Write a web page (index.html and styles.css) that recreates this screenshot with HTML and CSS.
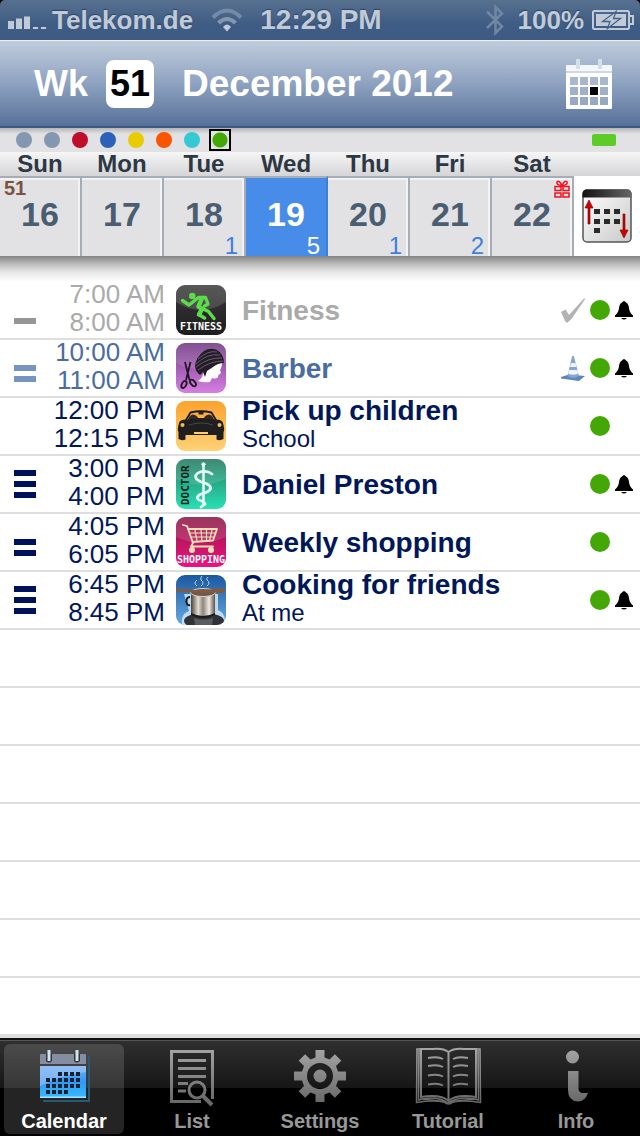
FILE: index.html
```
<!DOCTYPE html>
<html lang="en">
<head>
    <meta charset="UTF-8">
    <meta name="viewport" content="width=device-width, initial-scale=1.0">
    <title>Calendar - December 2012</title>
    <link rel="stylesheet" href="styles.css">
</head>
<body>
    <!-- shared shapes and gradients -->
    <svg class="defs" width="0" height="0" aria-hidden="true">
        <defs>
            <linearGradient id="tabGray" gradientUnits="userSpaceOnUse" x1="0" y1="0" x2="0" y2="60">
                <stop offset="0" stop-color="#a8a8a8"/>
                <stop offset="1" stop-color="#646464"/>
            </linearGradient>
            <symbol id="bell" viewBox="0 0 18 20">
                <path d="M7 2.500Q9-.5 11 2.500Q13.500 3.500 14 8Q14.500 13 18 15.500V17H0V15.500Q3.500 13 4 8Q4.500 3.500 7 2.500ZM6 18H12Q9 21 6 18Z"/>
            </symbol>
        </defs>
    </svg>

    <div class="status-bar">
        <div class="status-left">
            <svg width="38" height="20" viewBox="0 0 38 20" fill="#c1cbd8">
                <path d="M0 11h6v8H0zM8 8.500h6V19H8zM16 6.500h6V19h-6zM25 17h5v2h-5zM33 17h5v2h-5z"/>
            </svg>
            <span class="carrier">Telekom.de</span>
            <svg width="32" height="24" viewBox="0 0 32 24" fill="none" stroke-width="4">
                <path d="M2 9.500Q16-4.500 30 9.500" stroke="#748aa8"/>
                <path d="M7.500 15Q16 7 24.500 15" stroke="#8496b0"/>
                <path d="M12 19Q16 14 20 19L16 23.500Z" fill="#c1cbd8"/>
            </svg>
        </div>
        <span class="clock">12:29 PM</span>
        <div class="status-right">
            <svg class="bluetooth" width="18" height="32" viewBox="0 0 18 32" fill="none" stroke="#7187a4" stroke-width="2.500">
                <path d="M1 7.500L16 22.500L9.500 29V3L16 9.500L1 24"/>
            </svg>
            <span>100%</span>
            <svg width="42" height="20" viewBox="0 0 42 20">
                <rect x="1" y="1" width="36" height="18" rx="1.500" fill="none" stroke="#c1cbd8" stroke-width="2"/>
                <path d="M38 6h3v8h-3" fill="none" stroke="#c1cbd8" stroke-width="2"/>
                <rect x="4" y="4" width="30" height="12" fill="#c1cbd8"/>
                <path d="M24 1.500L10.500 11.500H18L15.500 18.500L28.500 8.500H21.500Z" fill="#c1cbd8" stroke="#45618a" stroke-width="1.300"/>
            </svg>
        </div>
    </div>

    <header class="title-bar">
        <span>Wk</span>
        <span class="week-badge">51</span>
        <h1>December 2012</h1>
        <button class="today-btn" aria-label="Go to date">
            <svg width="46" height="50" viewBox="0 0 46 50">
                <path d="M0 7Q0 6 1 6H45Q46 6 46 7V14H0Z" fill="#f3f6fa"/>
                <path d="M0 12h46v2H0z" fill="#cfd8e4"/>
                <path d="M10 0h4v10h-4zM32 0h4v10h-4z" fill="#d5dfea"/>
                <path d="M0 14H46V49Q46 50 45 50H1Q0 50 0 49Z" fill="#fff"/>
                <path d="M4 18h8v8H4zM14 18h8v8h-8zM24 18h8v8h-8zM34 18h8v8h-8z" fill="#a9b7cf"/>
                <path d="M4 28h8v8H4zM14 28h8v8h-8zM34 28h8v8h-8z" fill="#a0b0c9"/>
                <path d="M4 38h8v8H4zM14 38h8v8h-8zM24 38h8v8h-8zM34 38h8v8h-8z" fill="#98a8c3"/>
                <path d="M24 28h8v8h-8z" fill="#000"/>
            </svg>
        </button>
    </header>

    <div class="filters">
        <button class="dot slate" aria-label="Calendar 1"></button>
        <button class="dot slate" aria-label="Calendar 2"></button>
        <button class="dot red" aria-label="Calendar 3"></button>
        <button class="dot blue" aria-label="Calendar 4"></button>
        <button class="dot yellow" aria-label="Calendar 5"></button>
        <button class="dot orange" aria-label="Calendar 6"></button>
        <button class="dot cyan" aria-label="Calendar 7"></button>
        <button class="dot green selected" aria-label="Calendar 8"></button>
        <span class="sync"></span>
    </div>

    <div class="weekdays">
        <span>Sun</span>
        <span>Mon</span>
        <span>Tue</span>
        <span>Wed</span>
        <span>Thu</span>
        <span>Fri</span>
        <span>Sat</span>
    </div>

    <div class="week">
        <button class="day"><span class="week-no">51</span>16</button>
        <button class="day">17</button>
        <button class="day">18<span class="count">1</span></button>
        <button class="day active">19<span class="count">5</span></button>
        <button class="day">20<span class="count">1</span></button>
        <button class="day">21<span class="count">2</span></button>
        <button class="day">22
            <svg class="gift" width="16" height="18" viewBox="0 0 16 18" fill="none" stroke="#f01420" stroke-width="1.500">
                <path d="M1 6.500h6v4H1zM9 6.500h6v4H9zM1 13h6v4H1zM9 13h6v4H9z"/>
                <path d="M8 5.500Q2 5 3 2Q5-.5 8 5.500Q11-.5 13 2Q14 5 8 5.500ZM8 5v2"/>
            </svg>
        </button>
        <button class="week-switch" aria-label="Change view">
            <svg width="50" height="54" viewBox="0 0 50 54">
                <defs>
                    <linearGradient id="sheet" x1="0" y1="0" x2="1" y2="1">
                        <stop offset="0" stop-color="#fff"/>
                        <stop offset="1" stop-color="#c9c9c9"/>
                    </linearGradient>
                    <linearGradient id="sheetTop" x1="0" y1="0" x2="1" y2="0">
                        <stop offset="0" stop-color="#111"/>
                        <stop offset="1" stop-color="#666"/>
                    </linearGradient>
                </defs>
                <rect x="1" y="1" width="48" height="52" rx="4" fill="url(#sheet)" stroke="#555" stroke-width="1.500"/>
                <path d="M.5 8.500V5Q.5.500 5 .5H45Q49.500.500 49.500 5V8.500Z" fill="url(#sheetTop)"/>
                <path d="M12 20h6v5h-6zM22 20h6v5h-6zM32 20h6v5h-6zM12 30h6v5h-6zM22 30h6v5h-6zM32 30h6v5h-6zM12 39h6v5h-6z" fill="#2a2a2a"/>
                <path d="M7 11L11 19H8V35H6V19H3ZM42 49L38 41H41V25H43V41H46Z" fill="#d40000" stroke="#600" stroke-width=".6"/>
            </svg>
        </button>
    </div>
    <div class="week-shadow"></div>

    <ul class="events">
        <li class="event past">
            <span class="bars"><i></i></span>
            <span class="times">7:00 AM<br>8:00 AM</span>
            <svg class="event-icon" viewBox="0 0 50 50">
                <defs>
                    <linearGradient id="gFit" x1="0" y1="0" x2="0" y2="1">
                        <stop offset="0" stop-color="#3a3a3a"/>
                        <stop offset="1" stop-color="#1d1d1d"/>
                    </linearGradient>
                </defs>
                <rect width="50" height="50" fill="url(#gFit)"/>
                <path d="M0 0H50V17Q25 33 0 17Z" fill="#fff" opacity=".15"/>
                <circle cx="16.300" cy="11" r="3.300" fill="#5ddc4b"/>
                <g fill="none" stroke="#5ddc4b" stroke-width="3.400" stroke-linecap="round" stroke-linejoin="round">
                    <path d="M6.500 15.500L13 20L22.500 12.500H29.500L32 19L28.500 21"/>
                    <path d="M26 13L22.500 21.500L26 24L23 29.500" stroke-width="4.500"/>
                    <path d="M22.500 21.500L32.500 26.500L38 33.500M23.500 30L28.500 33" stroke-width="3.500"/>
                </g>
                <text class="icon-label" x="25" y="45" text-anchor="middle" font-size="10" fill="#fff">FITNESS</text>
            </svg>
            <div class="info"><span class="event-title">Fitness</span></div>
            <svg class="mark" viewBox="0 0 26 26">
                <path d="M1 15L5.500 12.500L9 18L24 1.500L25.500 1.500L11.500 22L7 26L5 24Z" fill="#b3b3b3"/>
            </svg>
            <span class="circle"></span>
            <svg class="bell"><use href="#bell"/></svg>
        </li>
        <li class="event current">
            <span class="bars"><i></i><i></i></span>
            <span class="times">10:00 AM<br>11:00 AM</span>
            <svg class="event-icon" viewBox="0 0 50 50">
                <defs>
                    <linearGradient id="gHair" x1="0" y1="0" x2="0" y2="1">
                        <stop offset="0" stop-color="#703a83"/>
                        <stop offset="1" stop-color="#d77fe2"/>
                    </linearGradient>
                </defs>
                <rect width="50" height="50" fill="url(#gHair)"/>
                <path d="M0 0H50V19Q25 33 0 20Z" fill="#fff" opacity=".12"/>
                <path d="M30 24Q40 19 46 19Q46 25 44 27L45 30L42.500 32Q42 37 36 35L34 39Q27 40 22 38Q28 34 27 28Z" fill="#fff"/>
                <path d="M48 20Q42 20 37 24L31 28L29 34L27 29L24 32Q19 28 19 23Q20 14 28 8Q34 4 41 7Q48 11 48 20Z" fill="#241d28"/>
                <path d="M20 21Q31 10 44 12M20 24Q33 14 46 15M22 27Q34 18 47 18M22 16Q32 7 41 9" fill="none" stroke="#7d6b85" stroke-width=".8"/>
                <g fill="none" stroke="#211527" stroke-width="1.800">
                    <path d="M9 19L13.500 37M14.500 19L10 37"/>
                    <ellipse cx="8" cy="41.500" rx="2.200" ry="3.800" transform="rotate(28 8 41.500)"/>
                    <ellipse cx="17" cy="40" rx="2.200" ry="3.800" transform="rotate(-40 17 40)"/>
                </g>
            </svg>
            <div class="info"><span class="event-title">Barber</span></div>
            <svg class="mark" viewBox="0 0 26 26">
                <path d="M1 22L9 19.500L25 21L19 26L1 23.500Z" fill="#5c86bd"/>
                <path d="M12 1.500Q13 0 14 1.500L19 21Q13 25 7.500 21Z" fill="#86a6cf"/>
                <path d="M11 8H15.500L16.500 12H10ZM9 15H17.500L18.300 18.500Q13 21 8 18.500Z" fill="#eff4fa"/>
            </svg>
            <span class="circle"></span>
            <svg class="bell"><use href="#bell"/></svg>
        </li>
        <li class="event">
            <span class="bars"></span>
            <span class="times">12:00 PM<br>12:15 PM</span>
            <svg class="event-icon" viewBox="0 0 50 50">
                <defs>
                    <linearGradient id="gCar" x1="0" y1="0" x2="0" y2="1">
                        <stop offset="0" stop-color="#fba22d"/>
                        <stop offset="1" stop-color="#ffd276"/>
                    </linearGradient>
                </defs>
                <rect width="50" height="50" fill="url(#gCar)"/>
                <path d="M10 19L14.500 11.500Q25 9 35.500 11.500L40 19" fill="none" stroke="#191919" stroke-width="1.800"/>
                <path d="M12 19Q13 14 17 13.500Q21 14 22 17H28Q29 14 33 13.500Q37 14 38 19Z" fill="#33291c"/>
                <path d="M22.500 11h5v2.500h-5z" fill="#222"/>
                <path d="M3 22Q4 18 11 18.500Q25 16.500 39 18.500Q46 18 47 22Q49 29 47.500 31V38Q44 40 40.500 38.500V34H9.500V38.500Q6 40 2.500 38V31Q1 29 3 22Z" fill="#1f1f1f"/>
                <path d="M13 24Q25 20 37 24" fill="none" stroke="#454545"/>
                <circle cx="6.500" cy="24" r="2" fill="#f3bd5a"/>
                <circle cx="43.500" cy="24" r="2" fill="#f3bd5a"/>
                <path d="M18 31h14v2H18z" fill="#ffcc6c"/>
            </svg>
            <div class="info">
                <span class="event-title">Pick up children</span>
                <span class="event-place">School</span>
            </div>
            <span class="circle"></span>
            <span class="bell"></span>
        </li>
        <li class="event">
            <span class="bars"><i></i><i></i><i></i></span>
            <span class="times">3:00 PM<br>4:00 PM</span>
            <svg class="event-icon" viewBox="0 0 50 50">
                <defs>
                    <linearGradient id="gDoc" x1="0" y1="0" x2="0" y2="1">
                        <stop offset="0" stop-color="#237a5f"/>
                        <stop offset="1" stop-color="#2ae0b4"/>
                    </linearGradient>
                </defs>
                <rect width="50" height="50" fill="url(#gDoc)"/>
                <path d="M0 0H50V20Q25 31 0 20Z" fill="#fff" opacity=".12"/>
                <text class="icon-label" transform="translate(12.500 46) rotate(-90)" font-size="11" fill="#10281f">DOCTOR</text>
                <path d="M27.500 5V46" stroke="#e5fff7" stroke-width="2.500"/>
                <path d="M25 5L27.500 3L30 5L27.500 9Z" fill="#e5fff7"/>
                <path d="M36 15Q31 11 24 13Q17 16 21 20.500Q24 23 30 24.500Q38 28 32 32.500Q29 34 25 35Q19 38 23 41Q29 43 29 45L25 48" fill="none" stroke="#e5fff7" stroke-width="2.800" stroke-linecap="round"/>
            </svg>
            <div class="info"><span class="event-title">Daniel Preston</span></div>
            <span class="circle"></span>
            <svg class="bell"><use href="#bell"/></svg>
        </li>
        <li class="event">
            <span class="bars"><i></i><i></i></span>
            <span class="times">4:05 PM<br>6:05 PM</span>
            <svg class="event-icon" viewBox="0 0 50 50">
                <defs>
                    <linearGradient id="gShop" x1="0" y1="0" x2="0" y2="1">
                        <stop offset="0" stop-color="#8a1c47"/>
                        <stop offset="1" stop-color="#f0117e"/>
                    </linearGradient>
                </defs>
                <rect width="50" height="50" fill="url(#gShop)"/>
                <path d="M0 0H50V20Q25 31 0 20Z" fill="#fff" opacity=".12"/>
                <g fill="none" stroke="#f5e2b4" stroke-width="1.800" stroke-linejoin="round" stroke-linecap="round">
                    <path d="M7 8L11 9L17 26L15 29.500H37"/>
                    <path d="M12.500 12H41L37 23.500L16.500 25"/>
                    <path d="M14 16H39.500M15.500 20H38.500M19 13L21 24M25 13L26 24M30.500 13V24M36 13L33.500 24" stroke-width="1.200"/>
                </g>
                <circle cx="16" cy="33" r="3" fill="#f5e2b4"/>
                <circle cx="35" cy="33" r="3" fill="#f5e2b4"/>
                <text class="icon-label" x="25" y="46" text-anchor="middle" font-size="10" fill="#fff">SHOPPING</text>
            </svg>
            <div class="info"><span class="event-title">Weekly shopping</span></div>
            <span class="circle"></span>
            <span class="bell"></span>
        </li>
        <li class="event">
            <span class="bars"><i></i><i></i><i></i></span>
            <span class="times">6:45 PM<br>8:45 PM</span>
            <svg class="event-icon" viewBox="0 0 50 50">
                <defs>
                    <linearGradient id="gCook" x1="0" y1="0" x2="0" y2="1">
                        <stop offset="0" stop-color="#1b57a0"/>
                        <stop offset="1" stop-color="#66abe0"/>
                    </linearGradient>
                    <linearGradient id="gPot" x1="0" y1="0" x2="1" y2="0">
                        <stop offset="0" stop-color="#4b423a"/>
                        <stop offset=".3" stop-color="#e6dfd6"/>
                        <stop offset=".5" stop-color="#8e857b"/>
                        <stop offset=".75" stop-color="#f0ebe4"/>
                        <stop offset="1" stop-color="#5a5148"/>
                    </linearGradient>
                </defs>
                <rect width="50" height="50" fill="url(#gCook)"/>
                <path d="M8 19H42V35Q49 38 49 46V50H6V44Q7 38 13 36Z" fill="#dcedfa" opacity=".8"/>
                <ellipse cx="28" cy="46" rx="20" ry="8" fill="#303238"/>
                <path d="M15 18H39V39Q27 45 15 39Z" fill="url(#gPot)"/>
                <path d="M18 43Q28 46 37 43L36 50H19Z" fill="#77777a" opacity=".6"/>
                <path d="M15 38Q27 44 39 38V40Q27 46 15 40Z" fill="#1b1b1d"/>
                <ellipse cx="27" cy="17.500" rx="12.500" ry="4" fill="#6c5a4b" stroke="#d9d0c7"/>
                <path d="M0 13.500L26 15.500L44 13Q50 13.500 49 16.500Q46 19.500 41 17.500L24 17.500L0 16.500Z" fill="#88583a"/>
                <path d="M14 22Q10 22 10.500 27Q11 31 14 30" fill="none" stroke="#15171c" stroke-width="2"/>
                <path d="M21 11Q17 8 21 5M25 11Q29 8 25 5Q24 3 26 1M31 11Q35 8 31 5Q30 4 32 2" fill="none" stroke="#b7d4ee"/>
            </svg>
            <div class="info">
                <span class="event-title">Cooking for friends</span>
                <span class="event-place">At me</span>
            </div>
            <span class="circle"></span>
            <svg class="bell"><use href="#bell"/></svg>
        </li>
    </ul>

    <nav class="tab-bar">
        <a href="#calendar" class="tab selected">
            <svg width="80" height="62" viewBox="0 0 80 62">
                <defs>
                    <linearGradient id="gCal" x1="0" y1="0" x2="0" y2="1">
                        <stop offset="0" stop-color="#6fb0f5"/>
                        <stop offset=".5" stop-color="#2f98fb"/>
                        <stop offset="1" stop-color="#35bdfb"/>
                    </linearGradient>
                </defs>
                <path d="M64 10h2v46H19v-2h45z" fill="#2a5a73"/>
                <path d="M16 9Q16 8 17 8H61Q62 8 62 9V18H16Z" fill="#858da0"/>
                <path d="M22 8h6v7q-3 3-6 0zM50 8h6v7q-3 3-6 0z" fill="#333"/>
                <path d="M23.500 4h3v11h-3zM51.500 4h3v11h-3z" fill="#cfe4f4"/>
                <rect x="16" y="20" width="46" height="32" fill="url(#gCal)"/>
                <path d="M16 20H62V26Q42 28 16 40Z" fill="#a9c8f3" opacity=".6"/>
                <path d="M16 50.500h46V52H16z" fill="#a5e4ff"/>
                <path d="M34 26h4v4h-4zM40 26h4v4h-4zM46 26h4v4h-4zM52 26h4v4h-4zM22 32h4v4h-4zM28 32h4v4h-4zM34 32h4v4h-4zM40 32h4v4h-4zM46 32h4v4h-4zM52 32h4v4h-4zM22 38h4v4h-4zM28 38h4v4h-4zM34 38h4v4h-4zM40 38h4v4h-4zM46 38h4v4h-4zM52 38h4v4h-4zM22 44h4v4h-4zM28 44h4v4h-4zM34 44h4v4h-4zM40 44h4v4h-4z" fill="#17212c"/>
            </svg>
            <span>Calendar</span>
        </a>
        <a href="#list" class="tab">
            <svg width="80" height="62" viewBox="0 0 80 62" fill="none" stroke="url(#tabGray)" stroke-width="3">
                <path d="M49 55.500H19.500V5.500H60.500V53"/>
                <path d="M26 14.500L54 14.501M26 22.500L54 22.501M26 30.500L54 30.501M26 37.500L36 37.501M26 45L34 45.001"/>
                <circle cx="45" cy="44" r="8"/>
                <path d="M51 50L60 59" stroke-width="4"/>
            </svg>
            <span>List</span>
        </a>
        <a href="#settings" class="tab">
            <svg width="80" height="62" viewBox="0 0 80 62">
                <path d="M35.500 4H44.500V11.500L49.500 13.600L54.900 8.300L61.300 14.700L56 20.100L58 25.500H66V34.500H58L56 39.900L61.300 45.300L54.900 51.700L49.500 46.400L44.500 48.500V56H35.500V48.500L30.500 46.400L25.100 51.700L18.700 45.300L24 39.900L22 34.500H14V25.500H22L24 20.100L18.700 14.700L25.100 8.300L30.500 13.600L35.500 11.500ZM40 17A13 13 0 1 0 40 43A13 13 0 1 0 40 17Z" fill="url(#tabGray)" fill-rule="evenodd"/>
                <circle cx="40" cy="30" r="6.500" fill="url(#tabGray)"/>
            </svg>
            <span>Settings</span>
        </a>
        <a href="#tutorial" class="tab">
            <svg width="80" height="62" viewBox="0 0 80 62" fill="none" stroke="url(#tabGray)" stroke-width="1.500">
                <path d="M40.500 6Q35 2 25 3L13 3V51Q33 48 40.500 55Q48 48 68 51V3L56 3Q46 2 40.500 6V55" stroke-width="2"/>
                <path d="M13 3H9L8.500 56.500Q25 54 36 56Q40.500 60 45 56Q56 54 72.500 56.500L72 3H68"/>
                <path d="M11 4L10.500 54Q28 49 40 57Q53 49 70.500 54L70 4M12 53Q30 54 40 57Q50 54 69 53"/>
                <path d="M20 12Q30 10 35 13M20 20Q30 18 35 21M20 29.500Q30 27.500 35 30.500M20 38.500Q30 36.500 35 39.500M45 13Q50 10 60 12M45 21Q50 18 60 20M45 30.500Q50 27.500 60 29.500M45 39.500Q50 36.500 60 38.500" stroke-width="2"/>
            </svg>
            <span>Tutorial</span>
        </a>
        <a href="#info" class="tab">
            <svg width="80" height="62" viewBox="0 0 80 62" fill="url(#tabGray)">
                <circle cx="36.500" cy="11" r="6.500"/>
                <path d="M32 25H42.500V43Q43 47 47 47H52Q49 55.500 42 55.500Q32 55 32 44Z"/>
            </svg>
            <span>Info</span>
        </a>
    </nav>
</body>
</html>
```
FILE: styles.css
```
* {
    box-sizing: border-box;
}

html {
    background: #000;
}

body {
    display: flex;
    flex-direction: column;
    min-height: 100vh;
    margin: 0;
    font-family: "Liberation Sans", Arial, sans-serif;
    color: #00175a;
}

button {
    padding: 0;
    border: none;
    background: none;
    font-family: inherit;
    cursor: pointer;
}

svg {
    display: block;
    flex: none;
}

.defs {
    position: absolute;
}

/* status bar */
.status-bar {
    display: grid;
    grid-template-columns: 1fr auto 1fr;
    align-items: center;
    height: 40px;
    padding: 0 6px 0 8px;
    border-radius: 5px 5px 0 0;
    background: linear-gradient(#57718f, #3f5c84 60%, #3d5a82);
    color: #c1cbd8;
    font-size: 26px;
    font-weight: bold;
    text-shadow: 0 -1px 1px #2c4466;
}

.status-left,
.status-right {
    display: flex;
    align-items: center;
}

.status-right {
    justify-content: flex-end;
}

.carrier {
    margin: 0 18px 0 6px;
}

.clock {
    font-size: 28px;
}

.bluetooth {
    margin-right: 14px;
}

.status-right span {
    margin-right: 8px;
}

/* title bar */
.title-bar {
    display: flex;
    align-items: center;
    height: 88px;
    padding: 0 28px 0 34px;
    border-top: 1px solid #eef2f7;
    border-bottom: 2px solid #3d5a84;
    background: linear-gradient(#c0ccdc, #8ea2c0 50%, #577199);
    color: #fff;
    font-size: 36px;
    font-weight: bold;
}

.week-badge {
    width: 48px;
    margin: 0 28px 0 18px;
    border-radius: 8px;
    background: #fff;
    color: #000;
    line-height: 48px;
    text-align: center;
}

.title-bar h1 {
    flex: 1;
    margin: 0;
    font-size: 37px;
}

/* calendar filter dots */
.filters {
    display: flex;
    align-items: center;
    gap: 6px;
    height: 24px;
    padding: 0 24px 0 13px;
    background: linear-gradient(#b5b5b8, #e2e2e4 6px);
}

.dot {
    width: 22px;
    height: 22px;
    border: 3px solid transparent;
    border-radius: 50%;
    background-clip: padding-box;
}

.dot.selected {
    border: 2px solid #000;
    border-radius: 0;
    background: radial-gradient(circle, #43a806 7px, #e2e2e4 8px);
}

.slate { background-color: #8497b1; }
.red { background-color: #bf0d2b; }
.blue { background-color: #2b62b8; }
.yellow { background-color: #e8cb00; }
.orange { background-color: #fb5500; }
.cyan { background-color: #34c9d3; }

.sync {
    width: 24px;
    height: 12px;
    margin-left: auto;
    border-radius: 2px;
    background: #5fcb28;
}

/* week strip */
.weekdays,
.week {
    display: grid;
    grid-template-columns: repeat(7, 1fr) 66px;
}

.weekdays {
    height: 24px;
    background: linear-gradient(#f6f6f7, #d5d5d7);
    color: #2c3844;
    font-size: 24px;
    font-weight: bold;
    line-height: 24px;
    text-align: center;
}

.weekdays span {
    padding-right: 2px;
}

.week {
    height: 80px;
    background: #fff;
}

.day {
    position: relative;
    padding-bottom: 6px;
    border-top: 2px solid #a5adb7;
    border-right: 2px solid #a5adb7;
    background: #e2e2e4;
    box-shadow: inset -2px 2px #f3f3f5;
    color: #4b5d70;
    font-size: 34px;
    font-weight: bold;
}

.day.active {
    border-right-color: #3f7fd2;
    background: #468ce8;
    box-shadow: none;
    color: #fff;
}

.week-no {
    position: absolute;
    top: 0;
    left: 4px;
    color: #7a5343;
    font-size: 20px;
    line-height: 20px;
}

.count {
    position: absolute;
    right: 6px;
    bottom: 0;
    color: #3f7fda;
    font-size: 24px;
    font-weight: normal;
    line-height: 20px;
}

.active .count {
    color: #fff;
}

.gift {
    position: absolute;
    top: 2px;
    right: 2px;
}

.week-switch {
    display: flex;
    align-items: center;
    justify-content: center;
}

.week-shadow {
    height: 26px;
    background: linear-gradient(#858585, #bcbcbc 8px, #e6e6e6 16px, #fff);
}

/* day agenda, lines repeat below the last event */
.events {
    flex: 1;
    margin: 0;
    padding: 0;
    background: repeating-linear-gradient(#fff 0, #fff 56px, #dedede 56px, #dedede 58px);
    list-style: none;
}

.event {
    display: flex;
    align-items: center;
    height: 58px;
    padding: 0 7px 2px 14px;
}

.bars {
    display: flex;
    flex-direction: column;
    justify-content: flex-end;
    gap: 5px;
    width: 22px;
    height: 56px;
    padding-bottom: 14px;
}

.bars i {
    height: 6px;
    background: #00115c;
}

.times {
    width: 129px;
    padding-bottom: 4px;
    font-size: 26px;
    line-height: 28px;
    text-align: right;
}

.event-icon {
    width: 50px;
    height: 50px;
    margin: 0 16px 0 11px;
    border-radius: 9px;
}

.icon-label {
    font-family: "DejaVu Sans Mono", monospace;
    font-weight: bold;
}

.info {
    display: flex;
    flex: 1;
    flex-direction: column;
    padding-top: 2px;
    line-height: 28px;
}

.event-title {
    font-size: 28px;
    font-weight: bold;
}

.event-place {
    margin-bottom: 4px;
    font-size: 24px;
}

.mark {
    width: 26px;
    height: 26px;
    margin-right: 4px;
}

.circle {
    width: 20px;
    height: 20px;
    border-radius: 50%;
    background: #43a806;
}

.bell {
    width: 18px;
    height: 20px;
    margin-left: 5px;
    fill: #000;
}

.past {
    color: #aaa;
}

.past .bars i {
    background: #969696;
}

.current {
    color: #4a6da1;
}

.current .bars i {
    background: #7594c2;
}

/* bottom tabs */
.tab-bar {
    display: grid;
    grid-template-columns: repeat(5, 1fr);
    height: 100px;
    padding-top: 4px;
    border-top: 2px solid #dedede;
    background: linear-gradient(#111 2px, #555 2px, #555 3px, #2f2f2f 3px, #161616 50px, #000 50px);
}

.tab {
    margin: 2px 4px 4px;
    padding-top: 2px;
    border-radius: 6px;
    color: #989898;
    font-size: 20px;
    font-weight: bold;
    line-height: 26px;
    text-align: center;
    text-decoration: none;
}

.tab svg {
    margin: 0 auto;
}

.tab.selected {
    background: rgba(255, 255, 255, 0.14);
    color: #fff;
}
```
